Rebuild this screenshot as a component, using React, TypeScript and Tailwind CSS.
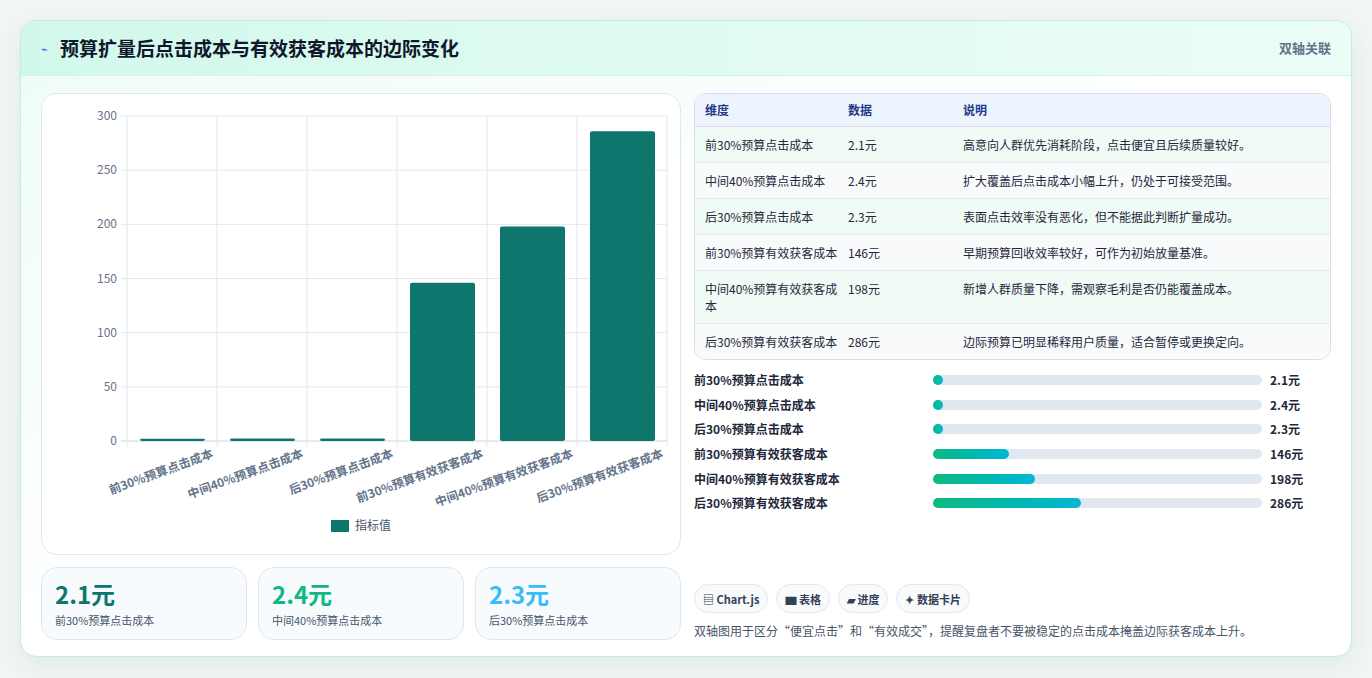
import React from "react";

const F = { fontFamily: '"Noto Sans CJK SC", "Noto Sans", sans-serif' };
const cats = ["前30%预算点击成本", "中间40%预算点击成本", "后30%预算点击成本", "前30%预算有效获客成本", "中间40%预算有效获客成本", "后30%预算有效获客成本"];
const vals = [2.1, 2.4, 2.3, 146, 198, 286];
const rows = [
  ["前30%预算点击成本", "2.1元", "高意向人群优先消耗阶段，点击便宜且后续质量较好。"],
  ["中间40%预算点击成本", "2.4元", "扩大覆盖后点击成本小幅上升，仍处于可接受范围。"],
  ["后30%预算点击成本", "2.3元", "表面点击效率没有恶化，但不能据此判断扩量成功。"],
  ["前30%预算有效获客成本", "146元", "早期预算回收效率较好，可作为初始放量基准。"],
  ["中间40%预算有效获客成本", "198元", "新增人群质量下降，需观察毛利是否仍能覆盖成本。"],
  ["后30%预算有效获客成本", "286元", "边际预算已明显稀释用户质量，适合暂停或更换定向。"],
];

function Chart() {
  const x0 = 85, y0 = 22, w = 540, h = 325;
  const ticks = [0, 50, 100, 150, 200, 250, 300];
  return (
    <svg width="640" height="460" className="block" style={F}>
      {ticks.map((t) => {
        const y = y0 + h - (t / 300) * h;
        return (
          <g key={t}>
            <line x1={x0 - 6} x2={x0 + w} y1={y} y2={y} stroke={t === 0 ? "#cbd5e1" : "#e5e7eb"} />
            <text x={x0 - 10} y={y + 4} textAnchor="end" fontSize="12" fill="#64748b">{t}</text>
          </g>
        );
      })}
      {cats.map((c, i) => {
        const bx = x0 + i * 90;
        const bh = Math.max(2, (vals[i] / 300) * h);
        return (
          <g key={c}>
            <line x1={bx} x2={bx} y1={y0} y2={y0 + h + 6} stroke="#e5e7eb" />
            <rect x={bx + 13} y={y0 + h - bh} width={65} height={bh} fill="#0f766e" rx="2" />
            <text transform={`translate(${bx + 87},${y0 + h + 16}) rotate(-20)`} textAnchor="end" fontSize="12" fontWeight="600" fill="#64748b">{c}</text>
          </g>
        );
      })}
      <line x1={x0 + w} x2={x0 + w} y1={y0} y2={y0 + h + 6} stroke="#e5e7eb" />
      <rect x={289} y={426} width={18} height={12} fill="#0f766e" />
      <text x={313} y={436} fontSize="12" fill="#475569">指标值</text>
    </svg>
  );
}

export default function App() {
  return (
    <div className="min-h-[678px] bg-[#f1f5f4] pt-5 px-5" style={F}>
      <div className="w-[1332px] h-[637px] rounded-2xl border border-[#bdeee0] bg-gradient-to-br from-[#eefcf6] via-white to-white shadow-[0_8px_24px_rgba(15,118,110,0.08)] overflow-hidden flex flex-col">
        <div className="h-[55px] shrink-0 flex items-center justify-between px-5 bg-gradient-to-r from-[#d2f8ec] to-[#ecfdf7] border-b border-[#d5f1e8]">
          <div className="flex items-center gap-3">
            <span className="text-[#2563eb] text-[11px]">⌁</span>
            <span className="text-[19px] font-bold text-[#0f172a]">预算扩量后点击成本与有效获客成本的边际变化</span>
          </div>
          <span className="text-[13px] text-[#64748b] font-semibold">双轴关联</span>
        </div>
        <div className="flex gap-[13px] px-5 pt-[17px]">
          <div className="w-[640px] flex flex-col gap-3">
            <div className="h-[462px] rounded-2xl border border-[#e2e8f0] bg-white"><Chart /></div>
            <div className="grid grid-cols-3 gap-[11px]">
              {[["2.1元", "text-[#0f766e]", "前30%预算点击成本"], ["2.4元", "text-[#10b981]", "中间40%预算点击成本"], ["2.3元", "text-[#38bdf8]", "后30%预算点击成本"]].map(([v, c, l]) => (
                <div key={l} className="h-[73px] rounded-2xl border border-[#dbe7f3] bg-[#f8fbfe] px-[13px] pt-[10px]">
                  <div className={`text-[24px] font-bold leading-[32px] ${c}`}>{v}</div>
                  <div className="text-[11px] text-[#475569] mt-[2px]">{l}</div>
                </div>
              ))}
            </div>
          </div>
          <div className="w-[640px] flex flex-col">
            <div className="rounded-xl border border-[#d6dee9] overflow-hidden text-[12px] text-[#1e293b]">
              <div className="flex h-[33px] items-center bg-[#eef4fd] border-b border-[#d6dee9] text-[#1e3a8a] font-semibold">
                <div className="w-[153px] pl-[10px]">维度</div><div className="w-[115px]">数据</div><div>说明</div>
              </div>
              {rows.map((r, i) => (
                <div key={i} className={`flex py-[9px] leading-[17px] ${i < 5 ? "border-b border-[#e5eaf0]" : ""} ${i % 2 === 0 ? "bg-[#f1fbf6]" : "bg-[#f8fafc]"}`}>
                  <div className="w-[153px] pl-[10px] pr-2">{r[0]}</div><div className="w-[115px]">{r[1]}</div><div>{r[2]}</div>
                </div>
              ))}
            </div>
            <div className="mt-[11px] flex flex-col gap-[6.7px]">
              {rows.map((r, i) => (
                <div key={i} className="flex items-center h-[18px] text-[12px] font-semibold text-[#1e293b]">
                  <div className="w-[239px]">{r[0]}</div>
                  <div className="w-[329px] h-[10px] rounded-full bg-[#e2e8f0]">
                    <div className="h-full rounded-full bg-gradient-to-r from-[#10b981] to-[#06b6d4]" style={{ width: Math.max(10, (vals[i] / 636) * 329) }} />
                  </div>
                  <div className="ml-2">{r[1]}</div>
                </div>
              ))}
            </div>
            <div className="mt-[72px] flex gap-2 text-[11px] font-semibold text-[#334155]">
              {["▤ Chart.js", "▆ 表格", "▰ 进度", "✦ 数据卡片"].map((p) => (
                <span key={p} className="h-[29px] px-[8px] flex items-center rounded-full border border-[#e2e8f0] bg-[#f8fafc]">{p}</span>
              ))}
            </div>
            <div className="mt-[9px] text-[12px] text-[#475569]">双轴图用于区分“便宜点击”和“有效成交”，提醒复盘者不要被稳定的点击成本掩盖边际获客成本上升。</div>
          </div>
        </div>
      </div>
    </div>
  );
}
